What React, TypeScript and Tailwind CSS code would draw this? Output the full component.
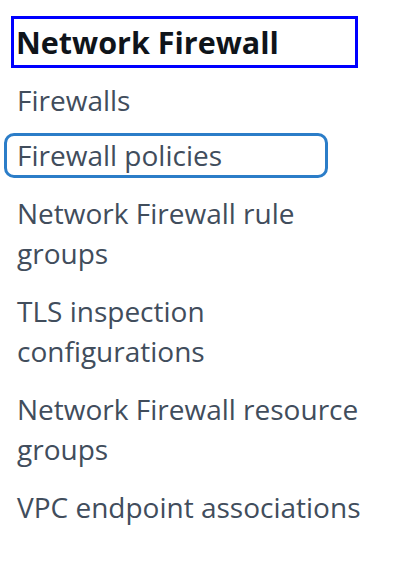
const items = [
  { label: 'Firewalls' },
  { label: 'Firewall policies', focused: true },
  { label: 'Network Firewall rule groups' },
  { label: 'TLS inspection configurations' },
  { label: 'Network Firewall resource groups' },
  { label: 'VPC endpoint associations' },
]

export default function App() {
  return (
    <div
      className="min-h-screen w-[414px] bg-white"
      style={{ fontFamily: '"Open Sans", "Noto Sans", Arial, sans-serif' }}
    >
      <nav className="pt-[16px]">
        <div className="ml-[11px] flex h-[52px] w-[347px] items-center border-[3px] border-[#0000ff] pl-[2px]">
          <h2 className="text-[30.5px] font-bold leading-none text-[#0f141a]">Network Firewall</h2>
        </div>

        <ul className="mt-[9px] ml-[4px] flex w-[372px] flex-col gap-[12px]">
          {items.map(item => (
            <li
              key={item.label}
              className={
                item.focused
                  ? '-mt-[2px] w-[324px] rounded-[10px] border-[3px] border-[#2b7dc8] pl-[10px] text-[28px] leading-[39px] text-[#414d5c]'
                  : 'rounded-[10px] border-[3px] border-transparent pl-[10px] text-[28px] leading-[40px] text-[#414d5c]'
              }
            >
              {item.label}
            </li>
          ))}
        </ul>
      </nav>
    </div>
  )
}
